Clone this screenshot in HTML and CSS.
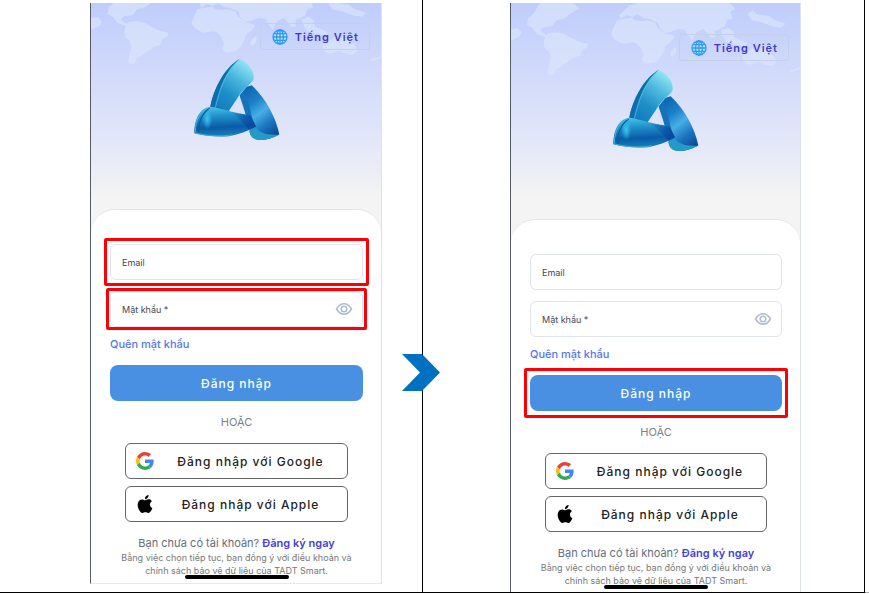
FILE: index.html
```html
<!DOCTYPE html>
<html lang="vi">
<head>
<meta charset="utf-8">
<meta name="viewport" content="width=device-width, initial-scale=1">
<title>TADT Smart - Đăng nhập</title>
<link rel="stylesheet" href="styles.css">
</head>
<body>
<svg class="defs" aria-hidden="true">
  <defs>
    <linearGradient id="topBand" x1=".75" y1=".05" x2=".2" y2="1">
      <stop offset="0" stop-color="#8fe3f5"/><stop offset=".3" stop-color="#4db9de"/><stop offset=".65" stop-color="#1c8fc8"/><stop offset="1" stop-color="#1479b9"/>
    </linearGradient>
    <linearGradient id="rightBand" x1=".2" y1="0" x2=".75" y2="1">
      <stop offset="0" stop-color="#0c62ac"/><stop offset=".3" stop-color="#1c80c8"/><stop offset=".52" stop-color="#48aee4"/><stop offset=".75" stop-color="#1b77c2"/><stop offset="1" stop-color="#084a97"/>
    </linearGradient>
    <linearGradient id="leftBand" x1=".2" y1="0" x2=".3" y2="1">
      <stop offset="0" stop-color="#4cc2e6"/><stop offset=".3" stop-color="#2295cd"/><stop offset=".7" stop-color="#0a5ba6"/><stop offset="1" stop-color="#1581bd"/>
    </linearGradient>
    <radialGradient id="glow">
      <stop offset="0" stop-color="#35c5f2"/><stop offset="1" stop-color="#35c5f2" stop-opacity="0"/>
    </radialGradient>
    <linearGradient id="shade" x1="0" x2="1">
      <stop offset="0" stop-color="#0845a0" stop-opacity="0"/><stop offset="1" stop-color="#0845a0"/>
    </linearGradient>
  </defs>
  <symbol id="logo" viewBox="330 170 270 260">
    <path fill="url(#rightBand)" d="M512 257C550 292 584 348 595 405C570 418 548 423 530 421C514 418 507 408 505 393L525 380L494 345L476 288L497 262Z"/>
    <path fill="#1273ba" d="M490 270L476 288Q490 316 495 347L507 392L525 382C507 350 508 312 490 285Z"/>
    <path fill="#249acb" d="M505 393L525 384C535 400 558 408 595 405C570 418 548 423 530 421C514 418 507 408 505 393Z"/>
    <path fill="url(#topBand)" d="M476 178C503 191 521 214 518 239C506 260 487 263 470 295L442 337L388 322C398 270 428 207 476 178Z"/>
    <path fill="#0d6caa" d="M476 178C435 212 414 265 400 325L388 322C398 270 428 207 476 178Z"/>
    <path fill="none" stroke="#58c4e5" stroke-width="2" d="M470 185C433 220 416 270 403 325"/>
    <path fill="url(#leftBand)" d="M388 322C412 324 447 338 508 348L525 381C500 395 474 405 444 410C410 413 372 409 340 401C340 362 355 326 388 322Z"/>
    <path fill="url(#shade)" d="M450 338L508 348L525 381L503 390Q486 365 450 338Z"/>
    <ellipse cx="379" cy="358" rx="15" ry="32" fill="url(#glow)"/>
    <path fill="none" stroke="#0b5c9e" stroke-width="4" d="M386 325C362 343 352 371 353 402"/>
    <path fill="none" stroke="#48bce0" stroke-width="3" d="M343 397C343 361 359 332 386 324"/>
    <path fill="none" stroke="#43acd4" stroke-width="3" d="M342 400C375 409 418 412 455 406"/>
  </symbol>
  <symbol id="world" viewBox="32 -24 872 240" preserveAspectRatio="xMidYMin slice">
    <path d="M120 -24H220L240 -8L212 8L196 22L172 28L158 46L134 48L122 58L132 68L148 74L142 80L112 68L98 50L82 42L86 22L104 6Z"/>
    <path d="M32 54L56 52L66 66L58 78L44 84L38 90L32 80Z"/>
    <path d="M146 66L172 64L194 68L216 82L240 92L266 98L262 110L248 118L242 134L220 142L206 152L194 160L184 168L170 174L166 190L154 194L144 186L148 164L154 142L150 124L136 112L132 96L136 80Z"/>
    <path d="M352 28L370 24L398 20L404 28L424 30L442 28L466 34L474 48L484 58L498 68L520 72L526 78L514 92L498 104L494 120L480 142L468 154L438 158L428 148L432 130L424 110L412 98L402 94L370 98L346 86L334 70L342 50Z"/>
    <path d="M518 116L530 108L528 126L518 138L510 132Z"/>
    <path d="M358 12L376 -2L388 -16L416 -24H692L708 -6L692 2L700 22L682 28L676 46L658 56L646 60L648 78L636 82L622 66L612 54L592 62L578 88L566 74L556 56L536 54L510 64L494 66L480 50L474 34L450 24L432 22L414 10L398 18L382 12L364 24Z"/>
    <path d="M744 8L760 -2L772 10L806 14L824 26L858 38L846 50L818 46L786 34L756 28Z"/>
    <path d="M664 58L686 50L700 60L704 80L722 86L744 98L736 106L706 100L682 94L672 78Z"/>
    <path d="M726 134L744 122L766 112L784 114L794 104L806 122L826 138L832 154L814 166L794 160L776 152L750 162L736 156Z"/>
    <path d="M868 180L892 172L904 168L900 176L876 184Z"/>
  </symbol>
  <symbol id="globe" viewBox="0 0 16 16">
    <circle cx="8" cy="8" r="7" fill="#b9e0fb"/>
    <g fill="none" stroke="#2e9bee" stroke-width="1.3"><circle cx="8" cy="8" r="7"/><ellipse cx="8" cy="8" rx="3.4" ry="7"/><path d="M8 1V15M1 8H15M2 4.6H14M2 11.4H14"/></g>
  </symbol>
  <symbol id="eye" viewBox="0 0 18 14">
    <g fill="none" stroke="#aebccd" stroke-width="1.5"><path d="M1.500 7C4 3 6.400 1.800 9 1.800S14 3 16.500 7C14 11 11.600 12.200 9 12.200S4 11 1.500 7Z"/><circle cx="9" cy="7" r="2.800"/></g>
  </symbol>
  <symbol id="google" viewBox="0 0 48 48">
    <path fill="#EA4335" d="M24 9.500c3.540 0 6.710 1.220 9.210 3.600l6.850-6.850C35.900 2.380 30.470 0 24 0 14.620 0 6.510 5.380 2.560 13.220l7.980 6.190C12.430 13.720 17.740 9.500 24 9.500z"/>
    <path fill="#4285F4" d="M46.980 24.550c0-1.570-.15-3.090-.38-4.550H24v9.020h12.940c-.58 2.960-2.260 5.480-4.780 7.180l7.730 6c4.510-4.180 7.090-10.360 7.090-17.650z"/>
    <path fill="#FBBC05" d="M10.530 28.590c-.48-1.450-.76-2.990-.76-4.590s.27-3.140.76-4.590l-7.980-6.190C.92 16.460 0 20.120 0 24c0 3.880.92 7.540 2.560 10.780l7.970-6.190z"/>
    <path fill="#34A853" d="M24 48c6.480 0 11.930-2.130 15.890-5.810l-7.730-6c-2.150 1.450-4.920 2.300-8.160 2.300-6.260 0-11.570-4.220-13.470-9.910l-7.980 6.190C6.510 42.620 14.620 48 24 48z"/>
  </symbol>
  <symbol id="apple" viewBox="0 0 24 24">
    <path d="M12.152 6.896c-.948 0-2.415-1.078-3.960-1.040-2.040.027-3.910 1.183-4.961 3.014-2.117 3.675-.546 9.103 1.519 12.090 1.013 1.454 2.208 3.090 3.792 3.039 1.520-.065 2.090-.987 3.935-.987 1.831 0 2.350.987 3.960.948 1.637-.026 2.676-1.480 3.676-2.948 1.156-1.688 1.636-3.325 1.662-3.415-.039-.013-3.182-1.221-3.220-4.857-.026-3.040 2.480-4.494 2.597-4.559-1.429-2.090-3.623-2.324-4.390-2.376-2-.156-3.675 1.090-4.610 1.090zM15.530 3.830c.843-1.012 1.400-2.427 1.245-3.830-1.207.052-2.662.805-3.532 1.818-.78.896-1.454 2.338-1.273 3.714 1.338.104 2.715-.688 3.559-1.701"/>
  </symbol>
</svg>

<main class="steps">
  <section class="step step-fill">
    <div class="phone">
      <header class="hero">
        <svg class="map" aria-hidden="true"><use href="#world"/></svg>
        <button class="lang" type="button"><svg class="globe" aria-hidden="true"><use href="#globe"/></svg>Tiếng Việt</button>
        <svg class="logo" role="img" aria-label="TADT Smart"><use href="#logo"/></svg>
      </header>
      <form class="card">
        <div class="fields">
          <div class="field marked"><label for="email-1">Email</label><input id="email-1" type="email"></div>
          <div class="field marked marked-tight"><label for="pass-1">Mật khẩu *</label><input id="pass-1" type="password"><button class="reveal" type="button" aria-label="Hiện mật khẩu"><svg aria-hidden="true"><use href="#eye"/></svg></button></div>
        </div>
        <a class="forgot" href="#">Quên mật khẩu</a>
        <div class="submit"><button class="login" type="submit">Đăng nhập</button></div>
        <p class="or">HOẶC</p>
        <div class="social">
          <button type="button"><svg aria-hidden="true"><use href="#google"/></svg><span>Đăng nhập với Google</span></button>
          <button type="button"><svg aria-hidden="true"><use href="#apple"/></svg><span>Đăng nhập với Apple</span></button>
        </div>
        <p class="signup">Bạn chưa có tài khoản? <a href="#">Đăng ký ngay</a></p>
        <p class="terms">Bằng việc chọn tiếp tục, bạn đồng ý với điều khoản và chính sách bảo vệ dữ liệu của TADT Smart.</p>
        <span class="home-bar"></span>
      </form>
    </div>
    <svg class="next" viewBox="0 0 38 37" aria-hidden="true"><path fill="#0070c0" d="M0 0H20L38 18.500L20 37H0L18 18.500Z"/></svg>
  </section>

  <section class="step step-submit">
    <div class="phone">
      <header class="hero">
        <svg class="map" aria-hidden="true"><use href="#world"/></svg>
        <button class="lang" type="button"><svg class="globe" aria-hidden="true"><use href="#globe"/></svg>Tiếng Việt</button>
        <svg class="logo" role="img" aria-label="TADT Smart"><use href="#logo"/></svg>
      </header>
      <form class="card">
        <div class="fields">
          <div class="field"><label for="email-2">Email</label><input id="email-2" type="email"></div>
          <div class="field"><label for="pass-2">Mật khẩu *</label><input id="pass-2" type="password"><button class="reveal" type="button" aria-label="Hiện mật khẩu"><svg aria-hidden="true"><use href="#eye"/></svg></button></div>
        </div>
        <a class="forgot" href="#">Quên mật khẩu</a>
        <div class="submit marked"><button class="login" type="submit">Đăng nhập</button></div>
        <p class="or">HOẶC</p>
        <div class="social">
          <button type="button"><svg aria-hidden="true"><use href="#google"/></svg><span>Đăng nhập với Google</span></button>
          <button type="button"><svg aria-hidden="true"><use href="#apple"/></svg><span>Đăng nhập với Apple</span></button>
        </div>
        <p class="signup">Bạn chưa có tài khoản? <a href="#">Đăng ký ngay</a></p>
        <p class="terms">Bằng việc chọn tiếp tục, bạn đồng ý với điều khoản và chính sách bảo vệ dữ liệu của TADT Smart.</p>
        <span class="home-bar"></span>
      </form>
    </div>
  </section>
  <div class="edge"></div>
</main>
</body>
</html>
```
FILE: styles.css
```css
* { box-sizing: border-box; }

body {
  margin: 0;
  background: #fff;
  font-family: Inter, "Liberation Sans", sans-serif;
  color: #414855;
}

button, input { font: inherit; color: inherit; }
button { cursor: pointer; }
p { margin: 0; }
a { text-decoration: none; }

.defs { position: absolute; width: 0; height: 0; }

/* Two table-like cells, one per step */
.steps {
  display: grid;
  grid-template-columns: 423fr 442fr 4fr;
}

.step {
  position: relative;
  display: flex;
  align-items: flex-start;
  padding-top: 3px;
  border-right: 1px solid #000;
  border-bottom: 1px solid #000;
}

.step-fill { padding-left: 90px; padding-right: 40px; }
.step-submit { padding-left: 87px; padding-right: 63px; }
.edge { border-bottom: 1px solid #aaa; }

.next {
  position: absolute;
  z-index: 1;
  top: 354px;
  right: -18px;
  width: 38px;
  height: 37px;
}

.phone {
  flex: 1;
  overflow: hidden;
  border-left: 1px solid #555b66;
  border-right: 1px solid #dde2ec;
  background: linear-gradient(#bfcdfc, #d1dafa 70px, #e3e7f8 140px, #f4f4f4 195px);
}

.step-fill .phone { border-bottom: 1px solid #e6e9f0; }

.hero {
  position: relative;
  display: flex;
  flex-direction: column;
  align-items: center;
  padding: 20px 11px 66px 10px;
}

.step-submit .hero { padding-top: 31px; padding-bottom: 65px; }

.map {
  position: absolute;
  top: -11px;
  left: 0;
  width: 100%;
  height: 80px;
  fill: #dde8fb;
  opacity: .6;
}

.step-submit .map { top: 0; }

.lang {
  position: relative;
  align-self: flex-end;
  display: flex;
  align-items: center;
  gap: 7px;
  height: 27px;
  padding: 0 10px 0 11px;
  border: 1px solid #c5cfe9;
  border-radius: 3px;
  background: transparent;
  color: #4338cb;
  font-size: 11px;
  font-weight: 600;
  letter-spacing: 1px;
}

.globe { width: 16px; height: 16px; }

.logo {
  width: 90px;
  height: 87px;
  margin-top: 6px;
}

.card {
  display: flex;
  flex-direction: column;
  padding: 34px 18px 4px 19px;
  border-top: 1px solid #dfe5ef;
  border-radius: 24px 24px 0 0;
  background: #fff;
}

.step-submit .card { padding-bottom: 3px; }

.fields {
  display: flex;
  flex-direction: column;
  gap: 11px;
}

.field {
  position: relative;
  display: flex;
  align-items: center;
  gap: 8px;
  height: 36px;
  padding: 0 9px 0 11px;
  border: 1px solid #dfe4ee;
  border-radius: 6px;
  font-size: 9px;
}

.field input {
  flex: 1;
  min-width: 0;
  border: 0;
  outline: 0;
  background: transparent;
}

.reveal {
  display: flex;
  padding: 0;
  border: 0;
  background: none;
}

.reveal svg { width: 18px; height: 14px; }

/* Red callout around the control the step refers to */
.marked::after {
  content: "";
  position: absolute;
  inset: -7px;
  border: 3px solid #fb0007;
  border-radius: 2px;
  pointer-events: none;
}

.submit.marked::after { inset: -7px -6px; }
.marked-tight::after { inset: -4px -5px; }

.forgot {
  align-self: flex-start;
  margin: 9px 0 13px;
  color: #5277e8;
  font-size: 11px;
  font-weight: 500;
  line-height: 16px;
}

.submit { position: relative; }

.login {
  width: 100%;
  height: 36px;
  display: block;
  border: 0;
  border-radius: 8px;
  background: #4990e2;
  color: #fff;
  font-size: 12px;
  font-weight: 500;
  letter-spacing: 1px;
}

.or {
  margin: 13px 0;
  color: #7a8089;
  font-size: 11px;
  line-height: 16px;
  text-align: center;
}

.social {
  display: flex;
  flex-direction: column;
  gap: 7px;
  padding: 0 15px;
}

.social button {
  display: flex;
  align-items: center;
  height: 36px;
  padding: 0 10px;
  border: 1px solid #666;
  border-radius: 6px;
  background: #fff;
  color: #222;
  font-size: 12px;
  font-weight: 500;
  letter-spacing: 1px;
}

.social svg { width: 18px; height: 18px; }
.social span { flex: 1; padding-left: 10px; }

.signup {
  margin-top: 13px;
  color: #646d7d;
  font-size: 11px;
  line-height: 16px;
  text-align: center;
}

.signup a { color: #4543d2; font-weight: 600; }

.terms {
  color: #777;
  font-size: 9px;
  line-height: 13px;
  text-align: center;
}

.home-bar {
  align-self: center;
  width: 104px;
  height: 4px;
  margin-top: -2px;
  border-radius: 2px;
  background: #000;
}
```
